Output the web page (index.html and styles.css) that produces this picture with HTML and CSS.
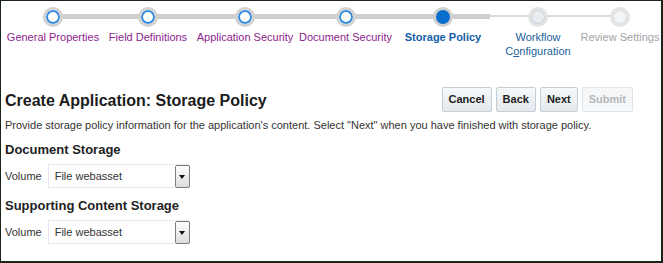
FILE: index.html
```html
<!DOCTYPE html>
<html>
  <head>
    <meta name="viewport" content="width=device-width, initial-scale=1.0" />
    <link rel="stylesheet" href="styles.css">
  </head>
  <body>
    <div class="frame">
      <!-- train of steps -->
      <div class="train">
        <div class="stop visited first" style="width: 96px">
          <div class="dot"></div>
          <div class="stop-label">General Properties</div>
        </div>
        <div class="stop visited" style="width: 94px">
          <div class="dot"></div>
          <div class="stop-label">Field Definitions</div>
        </div>
        <div class="stop visited" style="width: 100px">
          <div class="dot"></div>
          <div class="stop-label">Application Security</div>
        </div>
        <div class="stop visited" style="width: 101px">
          <div class="dot"></div>
          <div class="stop-label">Document Security</div>
        </div>
        <div class="stop current" style="width: 94px">
          <div class="dot"></div>
          <div class="stop-label">Storage Policy</div>
        </div>
        <div class="stop next" style="width: 96px">
          <div class="dot"></div>
          <div class="stop-label">Workflow<br>C<u>o</u>nfiguration</div>
        </div>
        <div class="stop disabled last" style="width: 68px">
          <div class="dot"></div>
          <div class="stop-label">Review Settings</div>
        </div>
      </div>

      <div class="page-head">
        <h1 class="title">Create Application: Storage Policy</h1>
        <div class="buttons">
          <button class="btn">Cancel</button>
          <button class="btn">Back</button>
          <button class="btn">Next</button>
          <button class="btn" disabled>Submit</button>
        </div>
      </div>
      <p class="intro">Provide storage policy information for the application's content. Select "Next" when you have finished with storage policy.</p>

      <h2 class="section">Document Storage</h2>
      <div class="field">
        <span class="field-label">Volume</span>
        <div class="choice">
          <span class="choice-text">File webasset</span>
          <span class="choice-btn"></span>
        </div>
      </div>

      <h2 class="section">Supporting Content Storage</h2>
      <div class="field">
        <span class="field-label">Volume</span>
        <div class="choice">
          <span class="choice-text">File webasset</span>
          <span class="choice-btn"></span>
        </div>
      </div>
    </div>
  </body>
</html>
```

FILE: styles.css
```css
body {
  margin: 0;
  background: #ffffff;
  font-family: "Liberation Sans", Arial, sans-serif;
}

.frame {
  box-sizing: border-box;
  width: 663px;
  height: 263px;
  border: 1px solid #17251a;
  border-right-width: 2px;
  border-bottom-width: 2px;
  padding: 0 0 0 4px;
  overflow: hidden;
}

/*the train of steps*/
.train {
  display: flex;
  height: 84px;
}

.stop {
  position: relative;
  display: flex;
  flex-direction: column;
  align-items: center;
  flex: none;
  padding-top: 6px;
}

/*line halves on each side of the dot*/
.stop:before,
.stop:after {
  content: "";
  position: absolute;
  top: 13px;
  height: 5px;
  width: 50%;
  background: #cfcfcf;
}
.stop:before {
  left: 0;
}
.stop:after {
  right: 0;
}
.stop.first:before,
.stop.last:after {
  display: none;
}
.stop.next:before,
.stop.next:after,
.stop.disabled:before {
  top: 14px;
  height: 2px;
  background: #dadada;
}

.dot {
  position: relative;
  z-index: 1;
  box-sizing: border-box;
  width: 20px;
  height: 20px;
  border-radius: 50%;
  background: #ffffff;
  border: 3px solid #d2d2d2;
  box-shadow: inset 0 0 0 2px #2f8be0;
}
.current .dot {
  background: #0a6fcc;
  box-shadow: none;
  border-color: #d0d0d0;
}
.next .dot,
.disabled .dot {
  background: #e9edf1;
  border-color: #e4e4e4;
  box-shadow: inset 0 0 0 1px #c6ced6;
}
.disabled .dot {
  background: #f3f4f6;
  box-shadow: inset 0 0 0 1px #d8dde2;
}

.stop-label {
  margin-top: 3px;
  font-size: 11px;
  line-height: 14px;
  text-align: center;
  white-space: nowrap;
  color: #8d1d8d;
}
.current .stop-label {
  font-weight: bold;
  color: #145ea8;
}
.next .stop-label {
  color: #225f9c;
}
.disabled .stop-label {
  color: #a4a4a4;
}

/*page header*/
.page-head {
  display: flex;
  align-items: center;
  justify-content: space-between;
  padding-right: 28px;
  height: 28px;
}
.title {
  margin: 4px 0 0 0;
  font-size: 16px;
  font-weight: bold;
  color: #1c1c1c;
}
.buttons {
  display: flex;
  gap: 4px;
}
.btn {
  height: 25px;
  padding: 0 6px;
  font-family: "Liberation Sans", Arial, sans-serif;
  font-size: 11px;
  font-weight: bold;
  color: #222;
  background: linear-gradient(#f6f8f9, #e4e9ed);
  border: 1px solid #c5ced6;
  border-radius: 2px;
}
.btn:disabled {
  color: #b4b8bc;
  background: #f6f7f8;
  border-color: #e0e4e8;
}

.intro {
  margin: 6px 0 0 0;
  font-size: 11px;
  color: #333;
}

.section {
  margin: 11px 0 0 0;
  font-size: 13px;
  font-weight: bold;
  color: #222;
}
.field + .section {
  margin-top: 10px;
}

.field {
  display: flex;
  align-items: center;
  gap: 6px;
  margin-top: 7px;
}
.field-label {
  font-size: 11px;
  color: #333;
}
.choice {
  box-sizing: border-box;
  display: flex;
  align-items: center;
  width: 142px;
  height: 24px;
  border: 1px solid #e6e8ea;
  background: #ffffff;
}
.choice-text {
  flex: 1;
  padding-left: 6px;
  font-size: 11px;
  color: #333;
}
.choice-btn {
  position: relative;
  box-sizing: border-box;
  width: 15px;
  height: 23px;
  margin-right: -1px;
  border: 1px solid #7d7d7d;
  border-radius: 2px;
  background: linear-gradient(#ffffff, #dcdcdc);
}
.choice-btn:after {
  content: "";
  position: absolute;
  left: 3px;
  top: 9px;
  border-left: 3px solid transparent;
  border-right: 3px solid transparent;
  border-top: 4px solid #111;
}
```
